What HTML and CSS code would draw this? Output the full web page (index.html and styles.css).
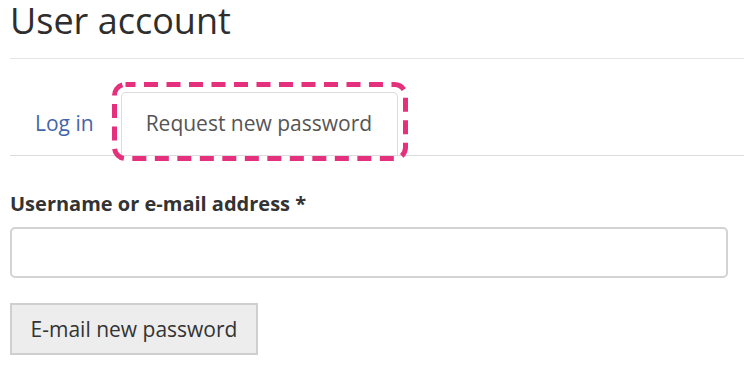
FILE: index.html
```html
<!DOCTYPE html>
<html lang="en">
<head>
<meta charset="utf-8">
<title>User account</title>
<link rel="stylesheet" href="styles.css">
</head>
<body>
<div class="page">
  <h1 class="title">User account</h1>
  <ul class="tabs">
    <li class="tab"><a class="tab-link" href="#">Log in</a></li>
    <li class="tab tab-active">
      <span class="tab-label">Request new password</span>
      <svg class="highlight" width="296" height="79" viewBox="0 0 296 79" aria-hidden="true">
        <rect x="2.5" y="2.5" width="291" height="74" rx="11" ry="11" fill="none" stroke="#e4307d" stroke-width="5" stroke-dasharray="14 8.5" stroke-dashoffset="4"/>
      </svg>
    </li>
  </ul>
  <form class="form">
    <label class="label" for="name">Username or e-mail address *</label>
    <input class="input" id="name" type="text">
    <button class="button" type="button">E-mail new password</button>
  </form>
</div>
</body>
</html>
```

FILE: styles.css
```css
* { box-sizing: border-box; }
html, body { margin: 0; padding: 0; background: #fff; }
body {
  font-family: "Open Sans", "Liberation Sans", sans-serif;
  color: #333;
}
.page {
  padding-left: 10px;
}
.title {
  margin: 0;
  font-size: 36px;
  font-weight: 400;
  line-height: 42px;
  color: #2e2e2e;
  padding-bottom: 16px;
  border-bottom: 1px solid #e4e4e4;
}
.tabs {
  list-style: none;
  margin: 0;
  padding: 33px 0 0 0;
  display: flex;
  align-items: flex-end;
  border-bottom: 1px solid #dcdcdc;
}
.tab {
  font-size: 21px;
  line-height: 27px;
  padding: 17px 25px 18px 25px;
  margin-right: 2px;
}
.tab-link {
  color: #4566a9;
  text-decoration: none;
}
.tab-active {
  position: relative;
  border: 1px solid #dcdcdc;
  border-bottom: none;
  border-radius: 5px 5px 0 0;
  padding: 17px 25px 18px 24px;
  color: #555;
  background: #fff;
}
.highlight {
  position: absolute;
  left: -10px;
  top: -11px;
}
.form {
  margin-right: 16px;
  padding-top: 34px;
}
.label {
  display: block;
  font-size: 20px;
  line-height: 27px;
  font-weight: 700;
  color: #333;
}
.input {
  display: block;
  width: 100%;
  height: 51px;
  margin-top: 10px;
  border: 2px solid #d3d3d3;
  border-radius: 5px;
  background: #fff;
  font-family: inherit;
  font-size: 20px;
}
.button {
  display: block;
  margin-top: 25px;
  width: 248px;
  height: 52px;
  padding: 0;
  font-family: inherit;
  font-size: 21px;
  line-height: 27px;
  color: #333;
  background: #ededed;
  border: 2px solid #cfcfcf;
  border-radius: 0;
}
```
